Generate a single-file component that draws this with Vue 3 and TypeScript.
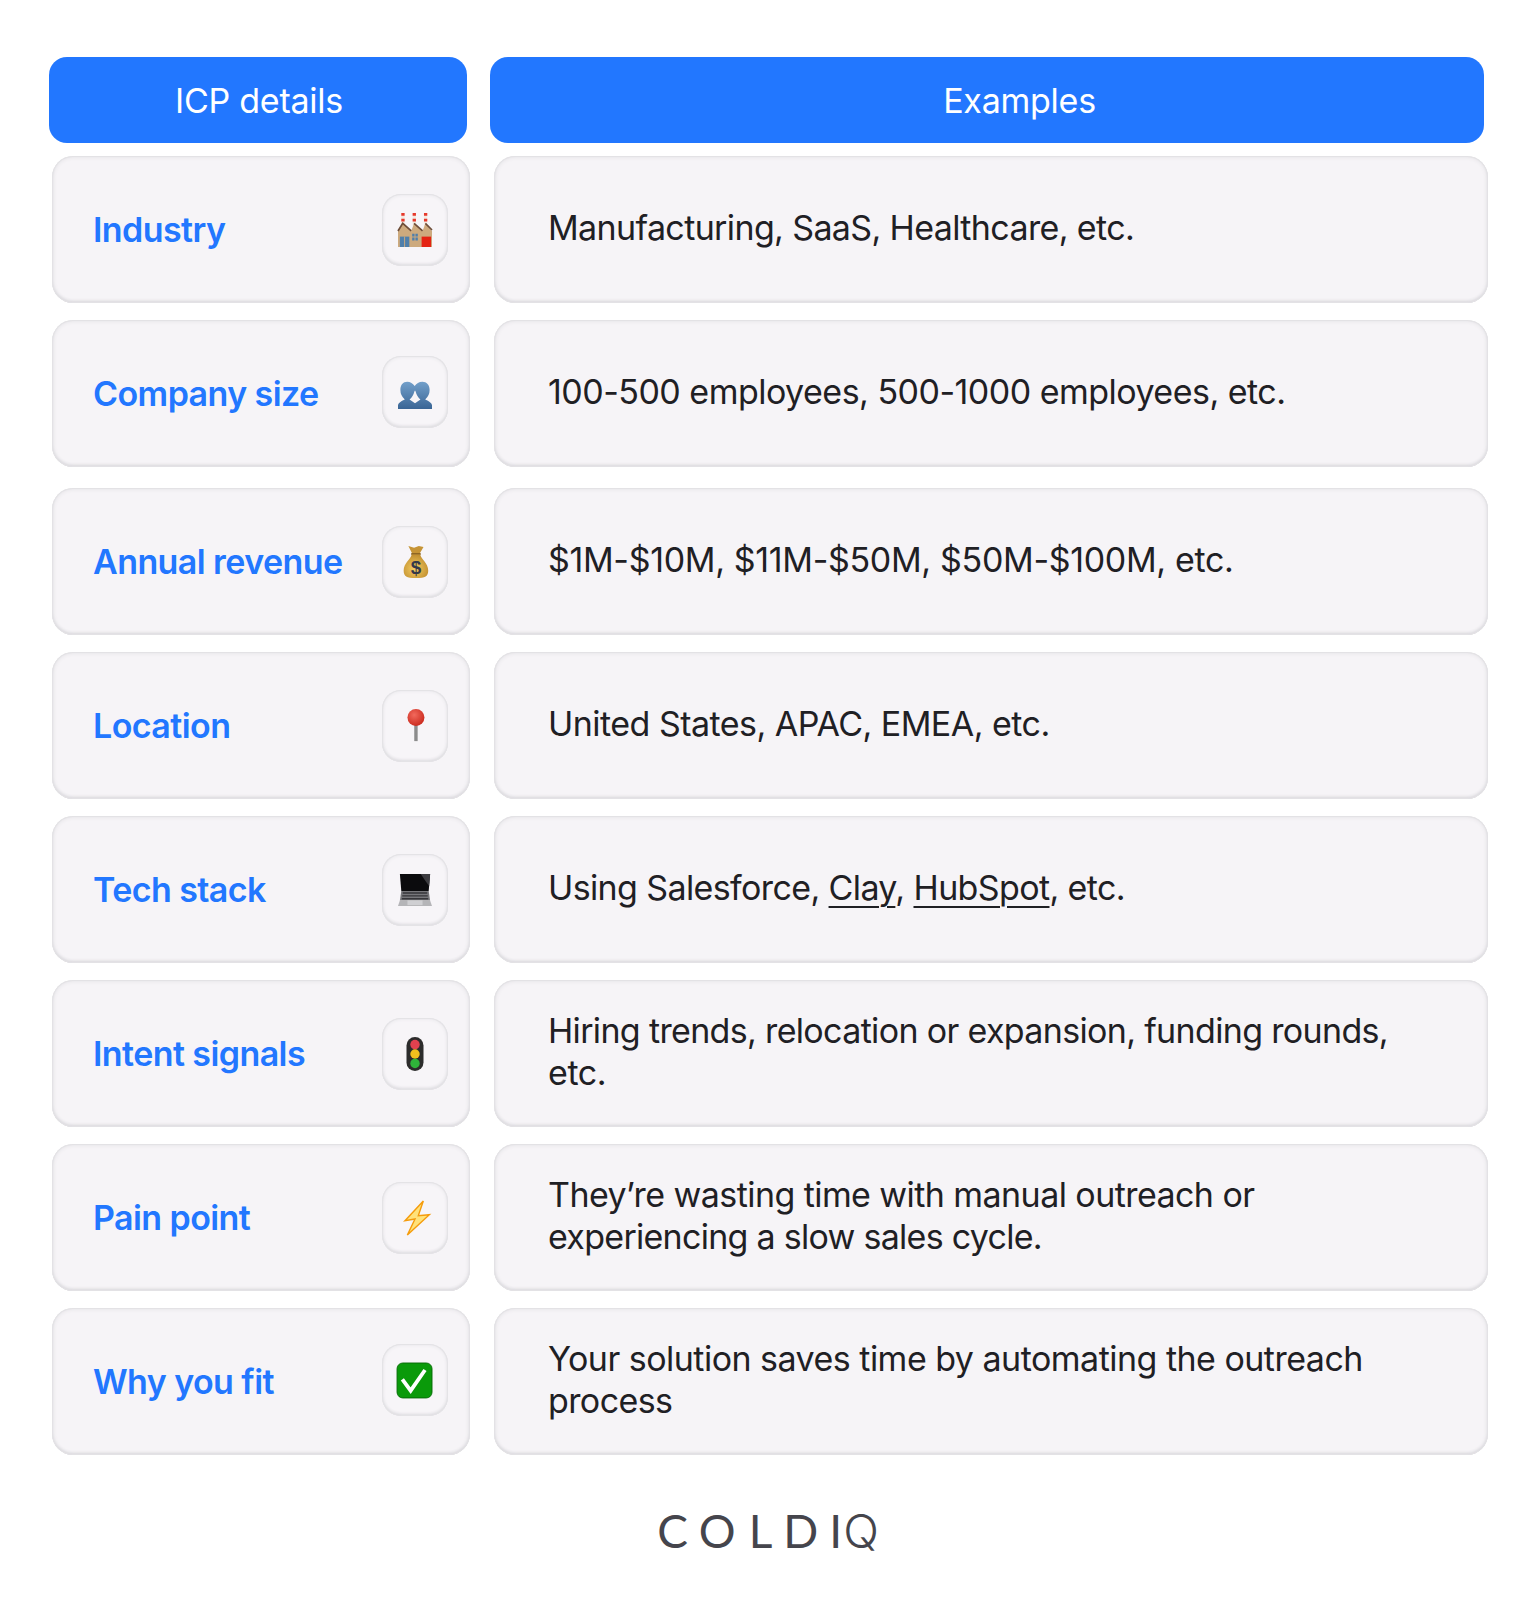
<script setup lang="ts">
interface Line { text: string; spacing: number; }
interface Row { label: string; icon: string; top: number; lift?: boolean; lines: Line[]; }
const rows: Row[] = [
  { label: 'Industry', icon: 'factory', top: 13, lines: [{ text: 'Manufacturing, SaaS, Healthcare, etc.', spacing: -0.63 }] },
  { label: 'Company size', icon: 'people', top: 17, lift: true, lines: [{ text: '100-500 employees, 500-1000 employees, etc.', spacing: -0.52 }] },
  { label: 'Annual revenue', icon: 'money', top: 21, lines: [{ text: '$1M-$10M, $11M-$50M, $50M-$100M, etc.', spacing: -0.33 }] },
  { label: 'Location', icon: 'pin', top: 17, lines: [{ text: 'United States, APAC, EMEA, etc.', spacing: -0.53 }] },
  { label: 'Tech stack', icon: 'laptop', top: 17, lines: [] },
  { label: 'Intent signals', icon: 'light', top: 17, lines: [{ text: 'Hiring trends, relocation or expansion, funding rounds,', spacing: -0.66 }, { text: 'etc.', spacing: -0.4 }] },
  { label: 'Pain point', icon: 'bolt', top: 17, lines: [{ text: 'They’re wasting time with manual outreach or', spacing: -0.57 }, { text: 'experiencing a slow sales cycle.', spacing: -0.72 }] },
  { label: 'Why you fit', icon: 'check', top: 17, lift: true, lines: [{ text: 'Your solution saves time by automating the outreach', spacing: -0.52 }, { text: 'process', spacing: -0.6 }] },
];
</script>

<template>
  <main class="page">
    <header class="heads">
      <div class="head left">ICP details</div>
      <div class="head right">Examples</div>
    </header>
    <section v-for="r in rows" :key="r.label" class="row" :style="{ marginTop: r.top + 'px' }">
      <div class="card left">
        <span class="label">{{ r.label }}</span>
        <span class="tile" :class="{ lift: r.lift }">
          <svg v-if="r.icon === 'factory'" viewBox="0 0 36 36" class="ico">
            <path fill="#f4e9e0" d="M3.500 0h3.500v14H3.500zM15.500 0H19v14h-3.500zM27.500 0H31v14h-3.500z"/>
            <path fill="#e6392b" d="M3.500 0h3.500v3H3.500zM15.500 0H19v3h-3.500zM27.500 0H31v3h-3.500zM3.500 6h3.500v3H3.500zM15.500 6H19v3h-3.500zM27.500 6H31v3h-3.500z"/>
            <path fill="#cdaa7e" d="M0 36V19l5-8 9 8 3-8 9 8 3-8 7 8v17z"/>
            <path fill="none" stroke="#6e4e3a" stroke-width="1.800" d="M0 19l5-8 9 8M17 11l9 8M29 11l7 7"/>
            <path fill="#4f7fab" d="M2 25h10v11H2z"/>
            <path fill="#cdaa7e" d="M6.500 25h1v11h-1z"/>
            <path fill="#e42313" d="M25 25h10v11H25z"/>
            <path fill="#4f7fab" d="M15 22h2.500v3H15zM18.500 22H21v3h-2.500zM15 26h2.500v3H15zM18.500 26H21v3h-2.500z"/>
          </svg>
          <svg v-else-if="r.icon === 'people'" viewBox="0 -20 100 100" class="ico">
            <defs>
              <linearGradient id="pp" x1="0" y1="0" x2="0" y2="1"><stop offset="0" stop-color="#729fca"/><stop offset="1" stop-color="#3a6595"/></linearGradient>
            </defs>
            <path fill="url(#pp)" d="M0 80V68q2-8 20-16q-13-12-13-28C7 9 15 0 27 0c10 0 16 5 22 12c6-7 12-12 23-12c12 0 21 9 21 24q0 16-13 28q18 8 20 16v12H0zM34 52l16 11 16-11q-10-8-15-26h-2q-5 18-15 26z"/>
          </svg>
          <svg v-else-if="r.icon === 'money'" viewBox="0 0 36 36" class="ico">
            <defs>
              <radialGradient id="mb" cx=".45" cy=".6" r=".65"><stop offset="0" stop-color="#f5cd62"/><stop offset="1" stop-color="#bd8a2c"/></radialGradient>
            </defs>
            <path fill="#c69436" d="M11 1l6 2 5-2 5 1-4 7h-8z"/>
            <path fill="#8d6420" d="M14 8.500h10v2H14z"/>
            <path fill="url(#mb)" d="M14.500 10h9c1 5 8.500 9 8.500 17 0 6-3 8-13 8S6 33 6 27c0-8 7.500-12 8.500-17z"/>
            <text x="19" y="31" font-family="'Liberation Sans',sans-serif" font-size="20" font-weight="700" text-anchor="middle" fill="#33384a">$</text>
          </svg>
          <svg v-else-if="r.icon === 'pin'" viewBox="0 0 36 36" class="ico">
            <defs>
              <radialGradient id="pb" cx=".4" cy=".35" r=".7"><stop offset="0" stop-color="#f2695c"/><stop offset="1" stop-color="#c9281c"/></radialGradient>
            </defs>
            <rect x="17.200" y="14" width="3.600" height="20" fill="#8c8c8c"/>
            <circle cx="19" cy="9" r="9" fill="url(#pb)"/>
          </svg>
          <svg v-else-if="r.icon === 'laptop'" viewBox="0 0 36 36" class="ico">
            <path fill="#0b0b0d" d="M2 1h32l-1.500 18h-29z"/>
            <path fill="#3c3c40" d="M24 1h10l-1 13z"/>
            <path fill="#77777b" d="M3.500 19h29l1.500 10H2z"/>
            <path fill="#36363a" d="M5 20.500h26v1.500H5zM4.500 23.500h27V25h-27zM4 26.500h28V28H4z"/>
            <path fill="#b5b5b8" d="M2 29h32l2 6H0z"/>
            <path fill="#cfcfd2" d="M10 29h16v5H10z"/>
          </svg>
          <svg v-else-if="r.icon === 'light'" viewBox="0 0 36 36" class="ico">
            <rect x="9" y="0" width="18" height="36" rx="9" fill="#2c2c2c"/>
            <circle cx="18" cy="8" r="5" fill="#e0414f"/>
            <circle cx="18" cy="18" r="5" fill="#f2c01e"/>
            <circle cx="18" cy="28" r="5" fill="#2fb53a"/>
          </svg>
          <svg v-else-if="r.icon === 'bolt'" viewBox="0 0 36 36" class="ico">
            <path fill="#ffe27a" stroke="#f59c0c" stroke-width="1.500" d="M26.800 0L7.400 20.800 18 19 9.900 36 33.200 14.500 21.500 15.500z"/>
          </svg>
          <svg v-else viewBox="0 0 36 36" class="ico">
            <rect x="-1" y="0" width="37" height="37" rx="6" fill="#0a9a0a" stroke="#056b05" stroke-width="1"/>
            <path fill="none" stroke="#fff" stroke-width="4" d="M4.600 17.300l8.800 12L28.600 7.400"/>
          </svg>
        </span>
      </div>
      <div class="card right body">
        <template v-if="r.lines.length">
          <span v-for="l in r.lines" :key="l.text" class="line" :style="{ letterSpacing: l.spacing + 'px' }">{{ l.text }}</span>
        </template>
        <span v-else class="line using">Using Salesforce, <u>Clay</u>, <u>HubSpot</u>, etc.</span>
      </div>
    </section>
    <footer class="logo"><span class="l-c">C</span><span class="l-o">O</span><span class="l-l">L</span><span class="l-d">D</span><span class="l-i">I</span><span class="l-q">Q</span></footer>
  </main>
</template>

<style>
html, body { background: #fff; }
</style>

<style scoped>
.page {
  width: 1536px;
  height: 1600px;
  box-sizing: border-box;
  padding: 57px 0 0 49px;
  font-family: Inter, "Liberation Sans", sans-serif;
  overflow: hidden;
}
.heads { display: flex; gap: 23px; }
.head {
  height: 86px;
  display: flex;
  align-items: center;
  justify-content: center;
  background: #2277ff;
  border-radius: 18px;
  color: #fff;
  font-size: 34px;
  letter-spacing: -0.25px;
}
.head.left, .card.left { width: 418px; flex: none; box-sizing: border-box; }
.head.right, .card.right { width: 994px; flex: none; box-sizing: border-box; }
.head.left { padding-left: 2px; }
.head.right { padding-left: 65px; }
.row { display: flex; gap: 24px; margin-left: 3px; }
.card {
  height: 147px;
  background: #f6f4f7;
  border-radius: 21px;
  box-shadow: inset 0 0 0 1px #e3e2e5, inset 0 0 5px #d8d7db, inset 0 -2px 3px #dddce0;
}
.card.left {
  display: flex;
  align-items: center;
  justify-content: space-between;
  padding: 0 22px 0 41px;
}
.label {
  color: #2277ff;
  font-size: 34px;
  font-weight: 600;
  letter-spacing: -0.58px;
}
.tile {
  width: 66px;
  height: 72px;
  display: flex;
  align-items: center;
  justify-content: center;
  border-radius: 19px;
  background: #f7f5f8;
  box-shadow: inset 0 0 0 1px #e4e3e6, inset 0 0 4px #dcdbdf, inset 0 -2px 3px #e0dfe3;
}
.tile.lift { margin-bottom: 4px; }
.ico { width: 34px; height: 34px; display: block; overflow: visible; }
.body {
  display: flex;
  flex-direction: column;
  justify-content: center;
  padding: 0 40px 3px 54px;
  color: #1f2024;
  font-size: 34px;
  line-height: 42px;
}
.line { display: block; white-space: nowrap; }
.using { letter-spacing: -0.62px; }
.body u { text-underline-offset: 6px; text-decoration-thickness: 1.500px; }
.logo {
  margin: 48px 49px 0 0;
  display: flex;
  justify-content: center;
  align-items: baseline;
  font-family: Lato, "Open Sans", sans-serif;
  font-weight: 400;
  font-size: 46px;
  color: #45454c;
  line-height: 56px;
}
.l-c { margin-right: 11px; }
.l-o { margin-right: 13px; }
.l-l { margin-right: 11px; }
.l-d { margin-right: 11px; }
.l-i { margin-right: 1px; }
.l-q { font-family: Inter, sans-serif; font-weight: 350; font-size: 47px; }
</style>
